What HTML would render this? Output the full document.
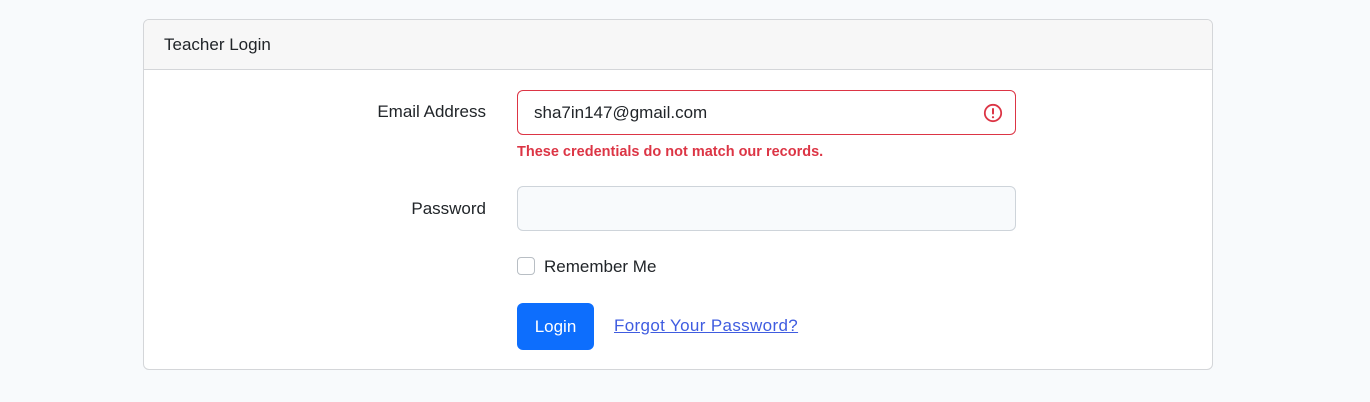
<!DOCTYPE html>
<html><head><style>
*{box-sizing:border-box;margin:0;padding:0}
body{width:1370px;height:402px;background:#f8fafc;font-family:"Liberation Sans",sans-serif;color:#212529;position:relative;overflow:hidden}
.card{position:absolute;left:143px;top:19px;width:1070px;height:351px;background:#fff;border:1px solid #d4d6d9;border-radius:6px;overflow:hidden}
.hd{height:50px;background:#f7f7f7;border-bottom:1px solid #d4d6d9;font-size:17px;line-height:49px;padding-left:20px}
.lbl{position:absolute;right:726px;font-size:17px;text-align:right}
.inp{position:absolute;left:373px;width:499px;height:45px;border:1px solid #ced4da;border-radius:6px;font-size:17px;line-height:43px;padding-left:16px}
.err{position:absolute;left:373px;top:124px;font-size:14.5px;font-weight:bold;color:#dc3545}
.cb{position:absolute;left:373px;top:237px;width:18px;height:18px;border:1px solid #b8bec4;border-radius:4px;background:#fff}
.btn{position:absolute;left:373px;top:283px;width:77px;height:47px;background:#0d6efd;color:#fff;border-radius:6px;font-size:17px;line-height:47px;text-align:center}
.lnk{position:absolute;left:470px;top:296px;font-size:17px;color:#3f5ce0;text-decoration:underline;letter-spacing:0.35px}
</style></head><body>
<div class="card">
<div class="hd">Teacher Login</div>
<div class="lbl" style="top:82px">Email Address</div>
<div class="inp" style="top:70px;border-color:#dc3545;background:#fff">sha7in147@gmail.com
<svg style="position:absolute;right:12px;top:12px" width="20" height="20" viewBox="0 0 20 20"><circle cx="10" cy="10" r="8.2" fill="none" stroke="#dc3545" stroke-width="1.8"/><rect x="9" y="5" width="2" height="6.5" rx="1" fill="#dc3545"/><circle cx="10" cy="14.2" r="1.1" fill="#dc3545"/></svg></div>
<div class="err">These credentials do not match our records.</div>
<div class="lbl" style="top:179px">Password</div>
<div class="inp" style="top:166px;background:#f8fafc"></div>
<div class="cb"></div>
<div style="position:absolute;left:400px;top:237px;font-size:17px">Remember Me</div>
<div class="btn">Login</div>
<div class="lnk">Forgot Your Password?</div>
</div>
</body></html>
